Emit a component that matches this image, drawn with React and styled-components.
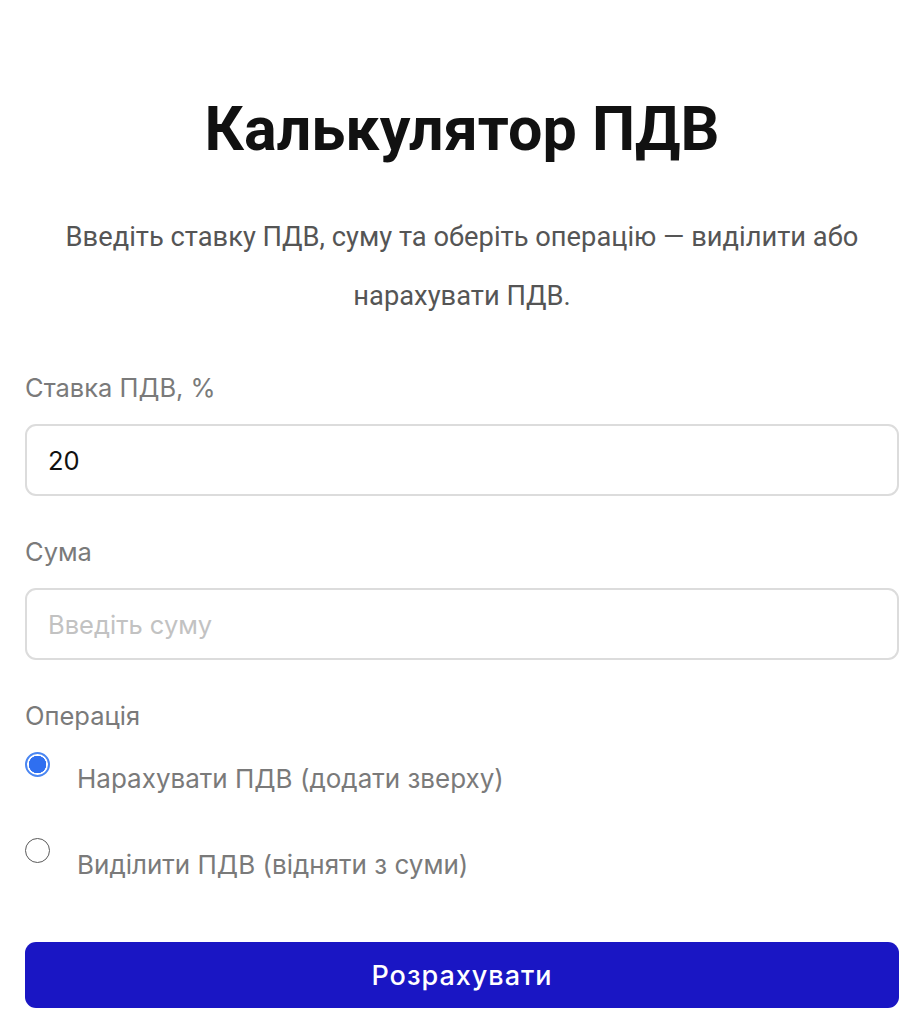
import React, { useState } from 'react';
import styled, { createGlobalStyle } from 'styled-components';

const GlobalStyle = createGlobalStyle`
  html, body {
    margin: 0;
    padding: 0;
    background: #ffffff;
  }
  * {
    box-sizing: border-box;
  }
`;

const Page = styled.div`
  padding: 96px 22px 0 25px;
  font-family: Inter, 'Noto Sans', sans-serif;
`;

const Title = styled.h1`
  margin: 0;
  text-align: center;
  font-family: Roboto, 'Liberation Sans', sans-serif;
  font-weight: 700;
  font-size: 61px;
  line-height: 67px;
  color: #111111;
`;

const Intro = styled.p`
  margin: 45px 0 47px;
  text-align: center;
  font-family: Roboto, 'Liberation Sans', sans-serif;
  font-size: 27.3px;
  line-height: 59px;
  color: #555555;
`;

const Field = styled.div`
  display: flex;
  flex-direction: column;
  margin-bottom: 41px;
`;

const Label = styled.label`
  font-size: 25.5px;
  line-height: 30px;
  color: #7a7a7a;
  margin-bottom: 21px;
`;

const Input = styled.input`
  width: 100%;
  height: 72px;
  padding: 0 21px;
  border: 2px solid #dcdcdc;
  border-radius: 11px;
  font-family: inherit;
  font-size: 25.5px;
  color: #111111;
  background: #ffffff;
  outline: none;
  &::placeholder {
    color: #c2c2c2;
  }
`;

const Options = styled.div`
  display: flex;
  flex-direction: column;
  gap: 32px;
`;

const Option = styled.label`
  display: flex;
  align-items: flex-start;
  cursor: pointer;
`;

const Radio = styled.input.attrs({ type: 'radio' })`
  appearance: none;
  flex: none;
  width: 25px;
  height: 25px;
  margin: 0 18px 0 0;
  border-radius: 50%;
  border: 1.5px solid #5a5a5a;
  background: #ffffff;
  &:checked {
    border: 2px solid #4a86f2;
    background: radial-gradient(circle, #2f6ff0 0 8.5px, #ffffff 9px);
  }
`;

const OptionText = styled.span`
  font-size: 26px;
  line-height: 54px;
  color: #7a7a7a;
  margin-left: 9px;
`;

const Submit = styled.button`
  display: block;
  width: 100%;
  height: 66px;
  margin-top: 50px;
  border: none;
  border-radius: 11px;
  background: #1a16c4;
  color: #ffffff;
  font-family: Inter, 'Noto Sans', sans-serif;
  font-weight: 500;
  font-size: 27px;
  letter-spacing: 1px;
  cursor: pointer;
`;

export default function App() {
  const [rate, setRate] = useState('20');
  const [sum, setSum] = useState('');
  const [mode, setMode] = useState('add');

  return (
    <>
      <GlobalStyle />
      <Page>
        <Title>Калькулятор ПДВ</Title>
        <Intro>
          Введіть ставку ПДВ, суму та оберіть операцію — виділити або нарахувати ПДВ.
        </Intro>
        <Field>
          <Label htmlFor="rate">Ставка ПДВ, %</Label>
          <Input id="rate" value={rate} onChange={(e) => setRate(e.target.value)} />
        </Field>
        <Field>
          <Label htmlFor="sum">Сума</Label>
          <Input
            id="sum"
            placeholder="Введіть суму"
            value={sum}
            onChange={(e) => setSum(e.target.value)}
          />
        </Field>
        <Label as="div">Операція</Label>
        <Options>
          <Option>
            <Radio name="op" checked={mode === 'add'} onChange={() => setMode('add')} />
            <OptionText>Нарахувати ПДВ (додати зверху)</OptionText>
          </Option>
          <Option>
            <Radio name="op" checked={mode === 'extract'} onChange={() => setMode('extract')} />
            <OptionText>Виділити ПДВ (відняти з суми)</OptionText>
          </Option>
        </Options>
        <Submit type="button">Розрахувати</Submit>
      </Page>
    </>
  );
}
